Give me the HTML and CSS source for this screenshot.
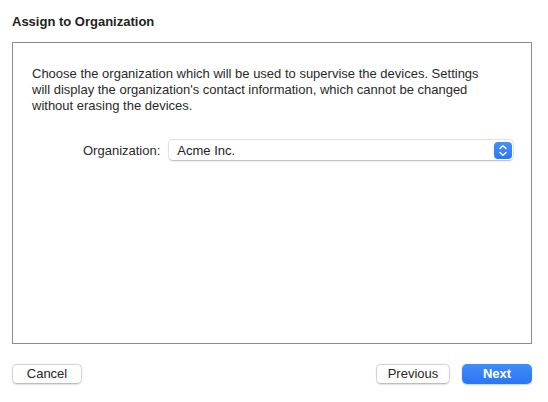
FILE: index.html
```html
<!DOCTYPE html>
<html>
<head>
<meta charset="utf-8">
<link rel="stylesheet" href="styles.css">
</head>
<body>
<div class="dialog">
  <h1 class="title">Assign to Organization</h1>
  <div class="panel">
    <p class="desc">Choose the organization which will be used to supervise the devices. Settings<br>will display the organization's contact information, which cannot be changed<br>without erasing the devices.</p>
    <div class="row">
      <span class="label">Organization:</span>
      <div class="select">
        <span class="value">Acme Inc.</span>
        <span class="stepper">
          <svg width="18" height="17" viewBox="0 0 18 17"><path d="M6 6.5 L9 3.8 L12 6.5" fill="none" stroke="#fff" stroke-width="1.5" stroke-linecap="round" stroke-linejoin="round"/><path d="M6 10.5 L9 13.2 L12 10.5" fill="none" stroke="#fff" stroke-width="1.5" stroke-linecap="round" stroke-linejoin="round"/></svg>
        </span>
      </div>
    </div>
  </div>
  <div class="footer">
    <button class="btn">Cancel</button>
    <div class="spacer"></div>
    <button class="btn prev">Previous</button>
    <button class="btn primary">Next</button>
  </div>
</div>
</body>
</html>
```
FILE: styles.css
```css
html, body {
  margin: 0;
  padding: 0;
  background: #ffffff;
}
body {
  font-family: "Liberation Sans", Arial, sans-serif;
  font-size: 13px;
  color: #262626;
  width: 548px;
  height: 402px;
  overflow: hidden;
}
.dialog {
  padding: 14px 16px 0 12px;
}
.title {
  margin: 0 0 12px 0;
  font-size: 13px;
  line-height: 16px;
  font-weight: bold;
  color: #222;
}
.panel {
  box-sizing: border-box;
  height: 302px;
  border: 1px solid #8c8c8c;
  padding: 23px 17px 0 19px;
}
.desc {
  margin: 0;
  line-height: 16px;
  color: #2a2a2a;
}
.row {
  display: flex;
  align-items: center;
  margin-top: 25px;
  padding-left: 51px;
}
.label {
  margin-right: 8px;
  color: #2a2a2a;
}
.select {
  flex: 1;
  height: 22px;
  box-sizing: border-box;
  display: flex;
  align-items: center;
  justify-content: space-between;
  border: 1px solid #e2e2e2;
  border-bottom-color: #c4c4c4;
  border-radius: 5px;
  background: #fff;
  box-shadow: 0 0.5px 1px rgba(0,0,0,0.08);
  padding: 0 1px 0 8px;
}
.value {
  color: #222;
}
.stepper {
  width: 18px;
  height: 17px;
  border-radius: 4px;
  background: linear-gradient(#4690fb, #2c78f4);
  display: flex;
}
.footer {
  display: flex;
  align-items: center;
  margin-top: 20px;
}
.spacer {
  flex: 1;
}
.btn {
  font-family: "Liberation Sans", Arial, sans-serif;
  font-size: 13px;
  color: #262626;
  height: 20px;
  padding: 0;
  background: #fff;
  border: 0.5px solid #d4d4d4;
  border-bottom-color: #bdbdbd;
  border-radius: 5px;
  box-shadow: 0 0.5px 1.5px rgba(0,0,0,0.12);
  width: 70px;
  line-height: 18px;
}
.prev {
  width: 74px;
  margin-right: 12px;
}
.primary {
  width: 70px;
  color: #fff;
  font-weight: bold;
  border: none;
  background: linear-gradient(#3f8cfb, #2b76f2);
  box-shadow: 0 0.5px 1.5px rgba(0,60,160,0.25);
}
```
